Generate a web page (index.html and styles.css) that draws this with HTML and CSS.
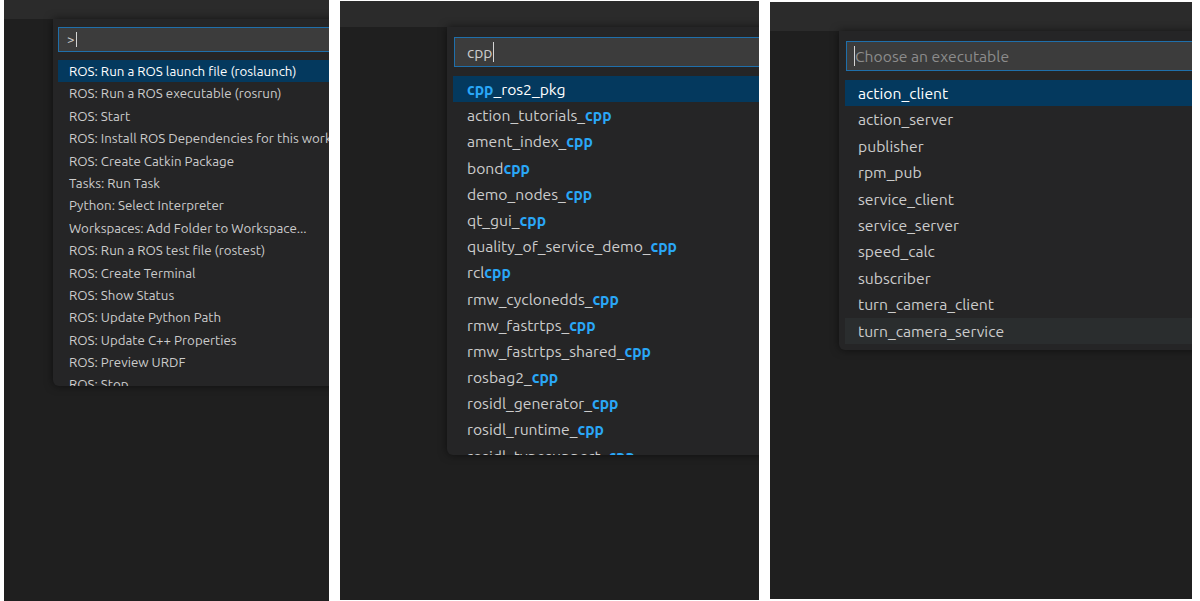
FILE: index.html
```html
<!DOCTYPE html>
<html>
<head>
<meta charset="utf-8">
<link rel="stylesheet" href="styles.css">
</head>
<body>
<div class="shots">
  <section class="panel p1">
    <div class="titlebar"></div>
    <div class="editor">
      <div class="quickpick">
        <div class="input"><span class="val">&gt;</span><span class="caret"></span></div>
        <ul class="list">
          <li class="sel">ROS: Run a ROS launch file (roslaunch)</li>
          <li>ROS: Run a ROS executable (rosrun)</li>
          <li>ROS: Start</li>
          <li>ROS: Install ROS Dependencies for this workspace using rosdep</li>
          <li>ROS: Create Catkin Package</li>
          <li>Tasks: Run Task</li>
          <li>Python: Select Interpreter</li>
          <li>Workspaces: Add Folder to Workspace...</li>
          <li>ROS: Run a ROS test file (rostest)</li>
          <li>ROS: Create Terminal</li>
          <li>ROS: Show Status</li>
          <li>ROS: Update Python Path</li>
          <li>ROS: Update C++ Properties</li>
          <li>ROS: Preview URDF</li>
          <li>ROS: Stop</li>
        </ul>
      </div>
    </div>
  </section>
  <section class="panel p2">
    <div class="titlebar"></div>
    <div class="editor">
      <div class="quickpick">
        <div class="input"><span class="val">cpp</span><span class="caret"></span></div>
        <ul class="list">
          <li class="sel"><b>cpp</b>_ros2_pkg</li>
          <li>action_tutorials_<b>cpp</b></li>
          <li>ament_index_<b>cpp</b></li>
          <li>bond<b>cpp</b></li>
          <li>demo_nodes_<b>cpp</b></li>
          <li>qt_gui_<b>cpp</b></li>
          <li>quality_of_service_demo_<b>cpp</b></li>
          <li>rcl<b>cpp</b></li>
          <li>rmw_cyclonedds_<b>cpp</b></li>
          <li>rmw_fastrtps_<b>cpp</b></li>
          <li>rmw_fastrtps_shared_<b>cpp</b></li>
          <li>rosbag2_<b>cpp</b></li>
          <li>rosidl_generator_<b>cpp</b></li>
          <li>rosidl_runtime_<b>cpp</b></li>
          <li>rosidl_typesupport_<b>cpp</b></li>
        </ul>
      </div>
    </div>
  </section>
  <section class="panel p3">
    <div class="titlebar"></div>
    <div class="editor">
      <div class="quickpick">
        <div class="input"><span class="caret"></span><span class="placeholder">Choose an executable</span></div>
        <ul class="list">
          <li class="sel">action_client</li>
          <li>action_server</li>
          <li>publisher</li>
          <li>rpm_pub</li>
          <li>service_client</li>
          <li>service_server</li>
          <li>speed_calc</li>
          <li>subscriber</li>
          <li>turn_camera_client</li>
          <li class="hover">turn_camera_service</li>
        </ul>
      </div>
    </div>
  </section>
</div>
</body>
</html>
```
FILE: styles.css
```css
* { box-sizing: border-box; }
html, body {
  margin: 0;
  padding: 0;
  background: #ffffff;
  width: 1200px;
  height: 601px;
  overflow: hidden;
}
body {
  font-family: "Ubuntu", "Noto Sans", "Open Sans", sans-serif;
  color: #cccccc;
}
.shots {
  display: flex;
  align-items: flex-start;
  padding-left: 4px;
  gap: 11px;
}
.panel {
  display: flex;
  flex-direction: column;
  overflow: hidden;
  background: #1f1f1f;
  flex-shrink: 0;
}
.titlebar { background: #2b2b2b; flex-shrink: 0; }
.editor { flex: 1; display: flex; align-items: flex-start; }
.quickpick {
  flex-shrink: 0;
  width: 700px;
  background: #252526;
  border-radius: 0 0 6px 6px;
  box-shadow: 0 0 8px rgba(0,0,0,0.55);
  display: flex;
  flex-direction: column;
}
.input {
  background: #3c3c3c;
  border: 1px solid #1f6fab;
  display: flex;
  align-items: center;
}
.caret {
  display: inline-block;
  width: 1px;
  background: #d4d4d4;
}
.placeholder { color: #8c8c8c; }
.list {
  list-style: none;
  margin: 0;
  padding: 0;
  overflow: hidden;
}
.list li {
  white-space: nowrap;
  overflow: hidden;
}
.list li.sel { background: #04395e; color: #ffffff; }
.list li.hover { background: #2a2d2e; }
.list b { color: #2aa7f7; font-weight: 700; }

/* panel 1 */
.p1 { width: 325px; height: 601px; }
.p1 .titlebar { height: 19px; }
.p1 .quickpick { margin-left: 49px; height: 367px; padding-top: 8px; }
.p1 .input { margin-left: 5px; height: 25px; padding-left: 8px; font-size: 13.3px; }
.p1 .caret { height: 15px; margin-left: 1px; }
.p1 .list { margin-top: 8px; margin-left: 5px; height: 326px; }
.p1 .list li { height: 22.4px; line-height: 23px; padding-left: 11px; font-size: 13.3px; }

/* panel 2 */
.p2 { width: 419px; height: 599px; margin-top: 1px; }
.p2 .titlebar { height: 26px; }
.p2 .quickpick { margin-left: 107px; height: 428px; padding-top: 10px; }
.p2 .input { margin-left: 7px; height: 30px; padding-left: 12px; font-size: 15.6px; }
.p2 .caret { height: 20px; margin-left: 0; }
.p2 .list { margin-top: 9px; margin-left: 6px; height: 379px; }
.p2 .list li { height: 26.2px; line-height: 27px; padding-left: 14px; font-size: 15.7px; }

/* panel 3 */
.p3 { width: 422px; height: 597px; margin-top: 2px; }
.p3 .titlebar { height: 29px; }
.p3 .quickpick { margin-left: 69px; height: 319px; padding-top: 10px; }
.p3 .input { margin-left: 7px; height: 30px; padding-left: 7px; font-size: 15.7px; }
.p3 .caret { height: 20px; margin-right: 0; }
.p3 .list { margin-top: 9px; margin-left: 6px; }
.p3 .list li { height: 26.4px; line-height: 27.5px; padding-left: 13px; font-size: 15.7px; }
```
